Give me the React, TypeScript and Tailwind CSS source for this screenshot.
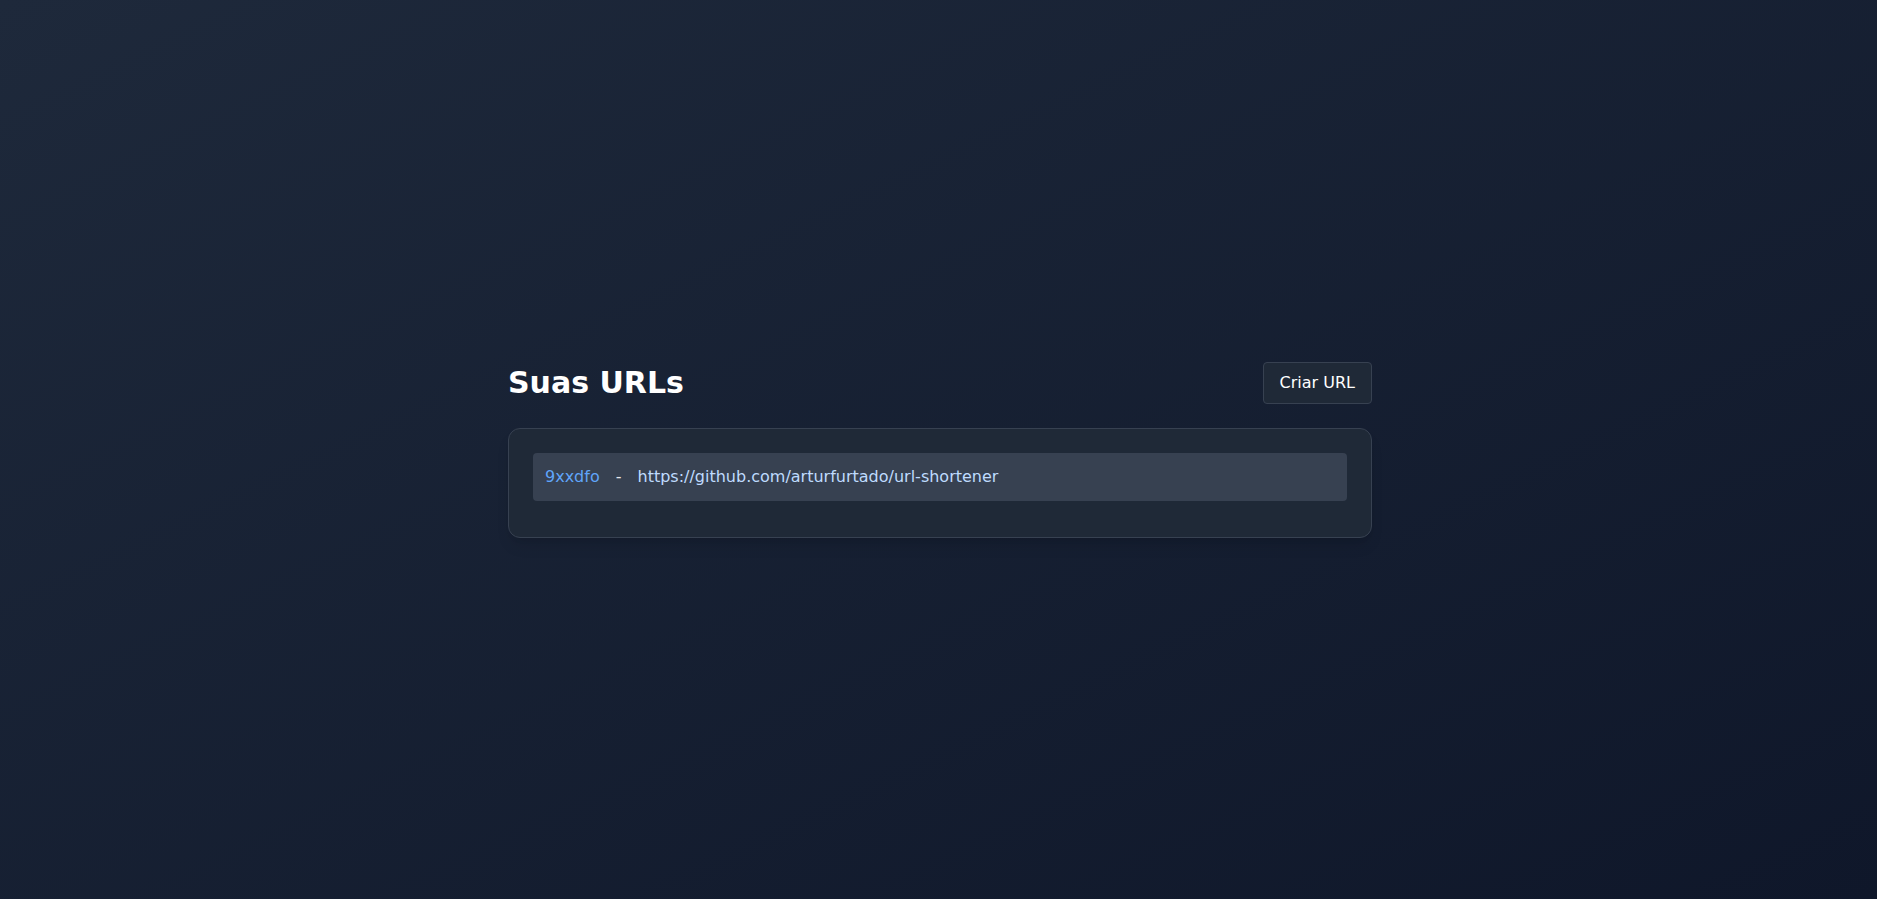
const urls = [
  { code: "9xxdfo", url: "https://github.com/arturfurtado/url-shortener" },
];

export default function App() {
  return (
    <main
      className="min-h-screen w-full flex items-center justify-center bg-gradient-to-br from-[#1e293b] to-[#0f172a] pl-[19px] pr-4"
      style={{ fontFamily: '"DejaVu Sans", sans-serif' }}
    >
      <div className="w-full max-w-[864px]">
        {/* Header */}
        <div className="flex items-center justify-between mb-6">
          <h1 className="text-3xl font-bold text-white">Suas URLs</h1>
          <button className="px-4 py-2 rounded bg-[#1f2937] border border-[#374151] text-white text-base">
            Criar URL
          </button>
        </div>

        {/* List */}
        <div className="bg-[#1f2937] border border-[#374151] rounded-xl p-6 shadow-lg">
          {urls.map((item) => (
            <div
              key={item.code}
              className="flex items-center gap-4 bg-[#374151] rounded px-3 py-3 mb-3 text-base"
            >
              <span className="text-[#60a5fa]">{item.code}</span>
              <span className="text-gray-200">-</span>
              <span className="text-[#bfdbfe]">{item.url}</span>
            </div>
          ))}
        </div>
      </div>
    </main>
  );
}
